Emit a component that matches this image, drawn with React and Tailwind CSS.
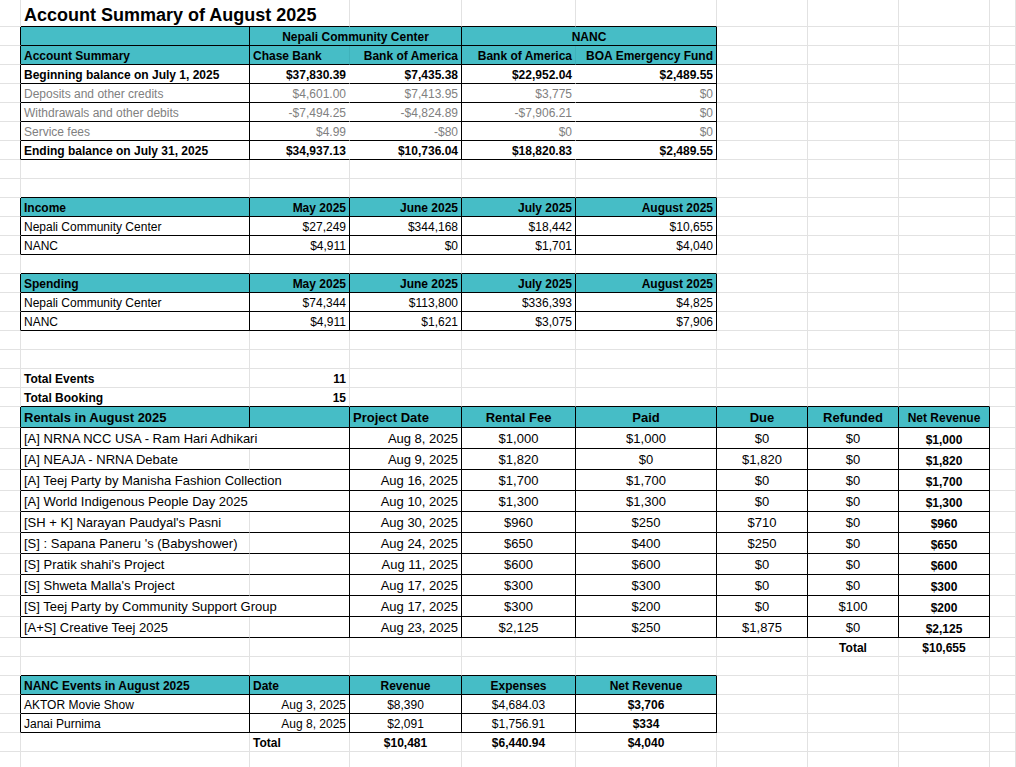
import React from "react";

// sheet columns: gutter, A..H, and the cut-off one at the right edge
const GRID = "grid grid-cols-[21px_229px_100px_112px_114px_141px_91px_91px_91px_1fr]";

const SPAN = { 1: "col-span-1", 2: "col-span-2" };
const RB = { g: "border-r-[#e2e2e2]", k: "border-r-black", t: "border-r-[#3fb2bb]", w: "border-r-white" };
const BB = { g: "border-b-[#e2e2e2]", k: "border-b-black" };
const ALIGN = { l: "justify-start pl-[3px]", r: "justify-end pr-[3px]", c: "justify-center" };
const BG = { t: "bg-[#46bdc6]", w: "bg-white", n: "" };

const S = "text-[12px] leading-none pb-[2px]";
const SB = "text-[12px] leading-none pb-[2px] font-bold";
const SG = "text-[12px] leading-none pb-[2px] text-[#808080]";
const M = "text-[13px] leading-none pb-[3px]";
const MB = "text-[13px] leading-none pb-[3px] font-bold";

function Cell({ span = 1, r = "g", b = "g", bg = "n", a = "l", className = "", children }) {
  return (
    <div className={`${SPAN[span]} flex items-end whitespace-nowrap border-r border-b ${RB[r]} ${BB[b]} ${BG[bg]} ${ALIGN[a]} ${className}`}>
      {children}
    </div>
  );
}

function Row({ h = "h-[19px]", children }) {
  return <div className={`${GRID} ${h}`}>{children}</div>;
}

// plain gridline cells from column `from` to the right edge
function Rest({ from }) {
  const cells = [];
  for (let i = from; i <= 9; i++) cells.push(<Cell key={i} />);
  return <>{cells}</>;
}

// empty row; first `k` sheet columns get a black bottom (top edge of the next table)
function Blank({ k = 0 }) {
  const cells = [<Cell key={0} />];
  for (let i = 1; i <= 9; i++) cells.push(<Cell key={i} b={i <= k ? "k" : "g"} />);
  return <Row>{cells}</Row>;
}

const summary = [
  ["Beginning balance on July 1, 2025", "$37,830.39", "$7,435.38", "$22,952.04", "$2,489.55", SB],
  ["Deposits and other credits", "$4,601.00", "$7,413.95", "$3,775", "$0", SG],
  ["Withdrawals and other debits", "-$7,494.25", "-$4,824.89", "-$7,906.21", "$0", SG],
  ["Service fees", "$4.99", "-$80", "$0", "$0", SG],
  ["Ending balance on July 31, 2025", "$34,937.13", "$10,736.04", "$18,820.83", "$2,489.55", SB],
];

const months = ["May 2025", "June 2025", "July 2025", "August 2025"];

const income = [
  ["Nepali Community Center", "$27,249", "$344,168", "$18,442", "$10,655"],
  ["NANC", "$4,911", "$0", "$1,701", "$4,040"],
];

const spending = [
  ["Nepali Community Center", "$74,344", "$113,800", "$336,393", "$4,825"],
  ["NANC", "$4,911", "$1,621", "$3,075", "$7,906"],
];

const rentals = [
  ["[A] NRNA NCC USA - Ram Hari Adhikari", "Aug 8, 2025", "$1,000", "$1,000", "$0", "$0", "$1,000", true],
  ["[A] NEAJA - NRNA Debate", "Aug 9, 2025", "$1,820", "$0", "$1,820", "$0", "$1,820", false],
  ["[A] Teej Party by Manisha Fashion Collection", "Aug 16, 2025", "$1,700", "$1,700", "$0", "$0", "$1,700", true],
  ["[A] World Indigenous People Day 2025", "Aug 10, 2025", "$1,300", "$1,300", "$0", "$0", "$1,300", true],
  ["[SH + K] Narayan Paudyal's Pasni", "Aug 30, 2025", "$960", "$250", "$710", "$0", "$960", false],
  ["[S] : Sapana Paneru 's (Babyshower)", "Aug 24, 2025", "$650", "$400", "$250", "$0", "$650", false],
  ["[S] Pratik shahi's Project", "Aug 11, 2025", "$600", "$600", "$0", "$0", "$600", false],
  ["[S] Shweta Malla's Project", "Aug 17, 2025", "$300", "$300", "$0", "$0", "$300", false],
  ["[S] Teej Party by Community Support Group", "Aug 17, 2025", "$300", "$200", "$0", "$100", "$200", true],
  ["[A+S] Creative Teej 2025", "Aug 23, 2025", "$2,125", "$250", "$1,875", "$0", "$2,125", false],
];

const nancEvents = [
  ["AKTOR Movie Show", "Aug 3, 2025", "$8,390", "$4,684.03", "$3,706"],
  ["Janai Purnima", "Aug 8, 2025", "$2,091", "$1,756.91", "$334"],
];

function MonthTable({ title, rows }) {
  return (
    <>
      <Row>
        <Cell r="k" />
        <Cell r="k" b="k" bg="t" className={SB}>{title}</Cell>
        {months.map((m) => (
          <Cell key={m} r="k" b="k" bg="t" a="r" className={SB}>{m}</Cell>
        ))}
        <Rest from={6} />
      </Row>
      {rows.map((row) => (
        <Row key={row[0]}>
          <Cell r="k" />
          <Cell r="k" b="k" className={S}>{row[0]}</Cell>
          {row.slice(1).map((v, i) => (
            <Cell key={i} r="k" b="k" a="r" className={S}>{v}</Cell>
          ))}
          <Rest from={6} />
        </Row>
      ))}
    </>
  );
}

export default function App() {
  return (
    <div className="w-[1016px] h-[767px] overflow-hidden bg-white text-black font-['Liberation_Sans',Arial,sans-serif]">
      {/* title */}
      <Row h="h-[27px]">
        <Cell />
        <Cell span={2} b="k" className="text-[18px] leading-none pb-[2px] font-bold">
          Account Summary of August 2025
        </Cell>
        <Cell b="k" />
        <Cell b="k" />
        <Cell b="k" />
        <Rest from={6} />
      </Row>

      {/* account summary */}
      <Row>
        <Cell r="k" />
        <Cell r="k" b="k" bg="t" />
        <Cell span={2} r="k" b="k" bg="t" a="c" className={SB}>Nepali Community Center</Cell>
        <Cell span={2} r="k" b="k" bg="t" a="c" className={SB}>NANC</Cell>
        <Rest from={6} />
      </Row>
      <Row>
        <Cell r="k" />
        <Cell r="k" b="k" bg="t" className={SB}>Account Summary</Cell>
        <Cell r="t" b="k" bg="t" className={SB}>Chase Bank</Cell>
        <Cell r="k" b="k" bg="t" a="r" className={SB}>Bank of America</Cell>
        <Cell r="t" b="k" bg="t" a="r" className={SB}>Bank of America</Cell>
        <Cell r="k" b="k" bg="t" a="r" className={SB}>BOA Emergency Fund</Cell>
        <Rest from={6} />
      </Row>
      {summary.map(([label, a, b, c, d, cls]) => (
        <Row key={label}>
          <Cell r="k" />
          <Cell r="k" b="k" bg="w" className={cls}>{label}</Cell>
          <Cell r="w" b="k" bg="w" a="r" className={cls}>{a}</Cell>
          <Cell r="k" b="k" bg="w" a="r" className={cls}>{b}</Cell>
          <Cell r="w" b="k" bg="w" a="r" className={cls}>{c}</Cell>
          <Cell r="k" b="k" bg="w" a="r" className={cls}>{d}</Cell>
          <Rest from={6} />
        </Row>
      ))}

      <Blank />
      <Blank k={5} />
      <MonthTable title="Income" rows={income} />
      <Blank k={5} />
      <MonthTable title="Spending" rows={spending} />
      <Blank />
      <Blank />

      {/* totals */}
      <Row>
        <Cell />
        <Cell className={SB}>Total Events</Cell>
        <Cell a="r" className={SB}>11</Cell>
        <Rest from={3} />
      </Row>
      <Row>
        <Cell />
        <Cell b="k" className={SB}>Total Booking</Cell>
        <Cell b="k" a="r" className={SB}>15</Cell>
        <Cell b="k" />
        <Cell b="k" />
        <Cell b="k" />
        <Cell b="k" />
        <Cell b="k" />
        <Cell b="k" />
        <Cell />
      </Row>

      {/* rentals */}
      <Row h="h-[21px]">
        <Cell r="k" />
        <Cell r="k" b="k" bg="t" className={MB}>Rentals in August 2025</Cell>
        <Cell r="k" b="k" bg="t" />
        <Cell r="k" b="k" bg="t" className={MB}>Project Date</Cell>
        <Cell r="k" b="k" bg="t" a="c" className={MB}>Rental Fee</Cell>
        <Cell r="k" b="k" bg="t" a="c" className={MB}>Paid</Cell>
        <Cell r="k" b="k" bg="t" a="c" className={MB}>Due</Cell>
        <Cell r="k" b="k" bg="t" a="c" className={MB}>Refunded</Cell>
        <Cell r="k" b="k" bg="t" a="c" className={SB + " pb-[3px]"}>Net Revenue</Cell>
        <Cell />
      </Row>
      {rentals.map(([name, date, fee, paid, due, refunded, net, long]) => (
        <Row key={name} h="h-[21px]">
          <Cell r="k" />
          {long ? (
            <Cell span={2} r="k" b="k" className={M}>{name}</Cell>
          ) : (
            <>
              <Cell b="k" className={M}>{name}</Cell>
              <Cell r="k" b="k" />
            </>
          )}
          <Cell r="k" b="k" a="r" className={M}>{date}</Cell>
          <Cell r="k" b="k" a="c" className={M}>{fee}</Cell>
          <Cell r="k" b="k" a="c" className={M}>{paid}</Cell>
          <Cell r="k" b="k" a="c" className={M}>{due}</Cell>
          <Cell r="k" b="k" a="c" className={M}>{refunded}</Cell>
          <Cell r="k" b="k" a="c" className={SB}>{net}</Cell>
          <Cell />
        </Row>
      ))}
      <Row>
        <Cell />
        <Cell />
        <Cell />
        <Cell />
        <Cell />
        <Cell />
        <Cell />
        <Cell a="c" className={SB}>Total</Cell>
        <Cell a="c" className={SB}>$10,655</Cell>
        <Cell />
      </Row>

      <Blank k={5} />

      {/* NANC events */}
      <Row>
        <Cell r="k" />
        <Cell r="k" b="k" bg="t" className={SB}>NANC Events in August 2025</Cell>
        <Cell r="k" b="k" bg="t" className={SB}>Date</Cell>
        <Cell r="k" b="k" bg="t" a="c" className={SB}>Revenue</Cell>
        <Cell r="k" b="k" bg="t" a="c" className={SB}>Expenses</Cell>
        <Cell r="k" b="k" bg="t" a="c" className={SB}>Net Revenue</Cell>
        <Rest from={6} />
      </Row>
      {nancEvents.map(([name, date, rev, exp, net]) => (
        <Row key={name}>
          <Cell r="k" />
          <Cell r="k" b="k" className={S}>{name}</Cell>
          <Cell r="k" b="k" a="r" className={S}>{date}</Cell>
          <Cell r="k" b="k" a="c" className={S}>{rev}</Cell>
          <Cell r="k" b="k" a="c" className={S}>{exp}</Cell>
          <Cell r="k" b="k" a="c" className={SB}>{net}</Cell>
          <Rest from={6} />
        </Row>
      ))}
      <Row>
        <Cell />
        <Cell />
        <Cell className={SB}>Total</Cell>
        <Cell a="c" className={SB}>$10,481</Cell>
        <Cell a="c" className={SB}>$6,440.94</Cell>
        <Cell a="c" className={SB}>$4,040</Cell>
        <Rest from={6} />
      </Row>
      <Blank />
    </div>
  );
}
